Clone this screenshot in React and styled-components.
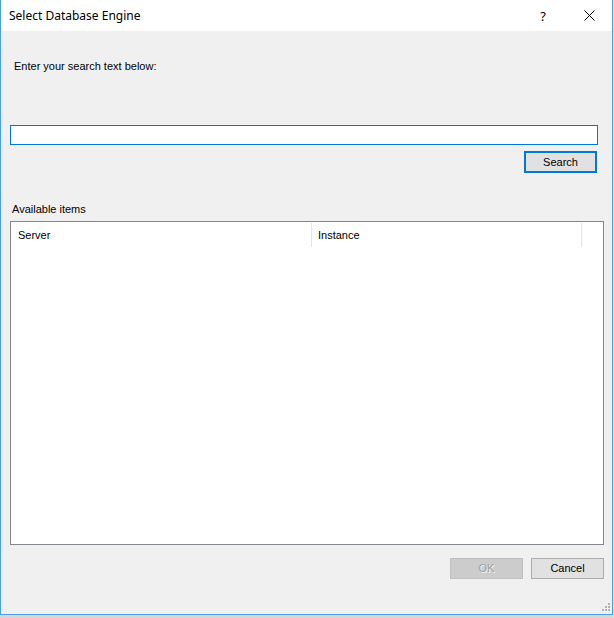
import styled, { createGlobalStyle } from 'styled-components';

const GlobalStyle = createGlobalStyle`
  html, body {
    margin: 0;
    padding: 0;
    background: #e4e4e4;
  }
  body {
    font-family: "Liberation Sans", Arial, sans-serif;
    font-size: 11px;
    color: #000;
  }
`;

const Page = styled.div`
  width: 614px;
  height: 618px;
  overflow: hidden;
`;

const Window = styled.div`
  position: relative;
  width: 613px;
  height: 615px;
  box-sizing: border-box;
  border: 1px solid #4b9de6;
  border-top: none;
  background: #f0f0f0;
  display: flex;
  flex-direction: column;
  box-shadow: 0 3px 0 #d6d6d6;
`;

const TitleBar = styled.div`
  height: 31px;
  background: #fff;
  display: flex;
  align-items: center;
  padding-left: 8px;
  font-family: "Segoe UI", "Noto Sans", sans-serif;
  font-size: 12px;
`;

const Title = styled.div`
  flex: 1;
  padding-bottom: 1px;
`;

const CaptionButton = styled.div`
  width: ${p => p.$w}px;
  height: 31px;
  display: flex;
  align-items: center;
  justify-content: center;
  font-size: 13px;
`;

const Body = styled.div`
  flex: 1;
  display: flex;
  flex-direction: column;
  padding: 0 8px 0 9px;
`;

const Label = styled.div`
  line-height: 13px;
  margin-top: ${p => p.$top}px;
  margin-left: ${p => p.$left}px;
`;

const SearchInput = styled.input`
  display: block;
  box-sizing: border-box;
  height: 20px;
  margin: 52px 6px 0 0;
  border: 1px solid #0078d7;
  background: #fff;
  outline: none;
  padding: 0 3px;
  font: inherit;
`;

const Button = styled.button`
  box-sizing: border-box;
  width: 73px;
  height: ${p => (p.$default ? 22 : 21)}px;
  padding: 0 0 ${p => (p.$default ? 1 : 2)}px;
  font-family: "Liberation Sans", Arial, sans-serif;
  font-size: 11px;
  color: ${p => (p.disabled ? '#a0a0a0' : '#000')};
  background: ${p => (p.disabled ? '#cccccc' : '#e1e1e1')};
  border: ${p => (p.$default ? '2px solid #0078d7' : p.disabled ? '1px solid #bfbfbf' : '1px solid #adadad')};
  text-shadow: ${p => (p.disabled ? '1px 1px 0 #f4f4f4' : 'none')};
`;

const SearchRow = styled.div`
  display: flex;
  justify-content: flex-end;
  margin: 6px 7px 0 0;
`;

const List = styled.div`
  box-sizing: border-box;
  height: 324px;
  margin-top: 5px;
  border: 1px solid #828790;
  background: #fff;
`;

const Header = styled.div`
  display: flex;
  height: 25px;
`;

const HeaderCell = styled.div`
  box-sizing: border-box;
  width: ${p => p.$w}px;
  height: 24px;
  margin-top: 1px;
  padding-left: ${p => p.$pad}px;
  display: flex;
  align-items: center;
  border-right: 1px solid #e5e5e5;
`;

const Footer = styled.div`
  display: flex;
  justify-content: flex-end;
  gap: 8px;
  margin-top: 13px;
`;

const Grip = styled.svg`
  position: absolute;
  right: 1px;
  bottom: 2px;
`;

export default function App() {
  return (
    <Page>
      <GlobalStyle />
      <Window>
        <TitleBar>
          <Title>Select Database Engine</Title>
          <CaptionButton $w={46}>?</CaptionButton>
          <CaptionButton $w={46}>
            <svg width="11" height="11" viewBox="0 0 11 11">
              <path d="M0.5 0.5 L10.5 10.5 M10.5 0.5 L0.5 10.5" stroke="#000" strokeWidth="1" fill="none" />
            </svg>
          </CaptionButton>
        </TitleBar>
        <Body>
          <Label $top={29} $left={4}>Enter your search text below:</Label>
          <SearchInput />
          <SearchRow>
            <Button $default>Search</Button>
          </SearchRow>
          <Label $top={30} $left={2}>Available items</Label>
          <List>
            <Header>
              <HeaderCell $w={301} $pad={7}>Server</HeaderCell>
              <HeaderCell $w={270} $pad={6}>Instance</HeaderCell>
            </Header>
          </List>
          <Footer>
            <Button disabled>OK</Button>
            <Button>Cancel</Button>
          </Footer>
        </Body>
        <Grip width="9" height="9" viewBox="0 0 9 9">
          <g fill="#b4b4b4">
            <rect x="6" y="0" width="2" height="2" />
            <rect x="3" y="3" width="2" height="2" />
            <rect x="6" y="3" width="2" height="2" />
            <rect x="0" y="6" width="2" height="2" />
            <rect x="3" y="6" width="2" height="2" />
            <rect x="6" y="6" width="2" height="2" />
          </g>
        </Grip>
      </Window>
    </Page>
  );
}
